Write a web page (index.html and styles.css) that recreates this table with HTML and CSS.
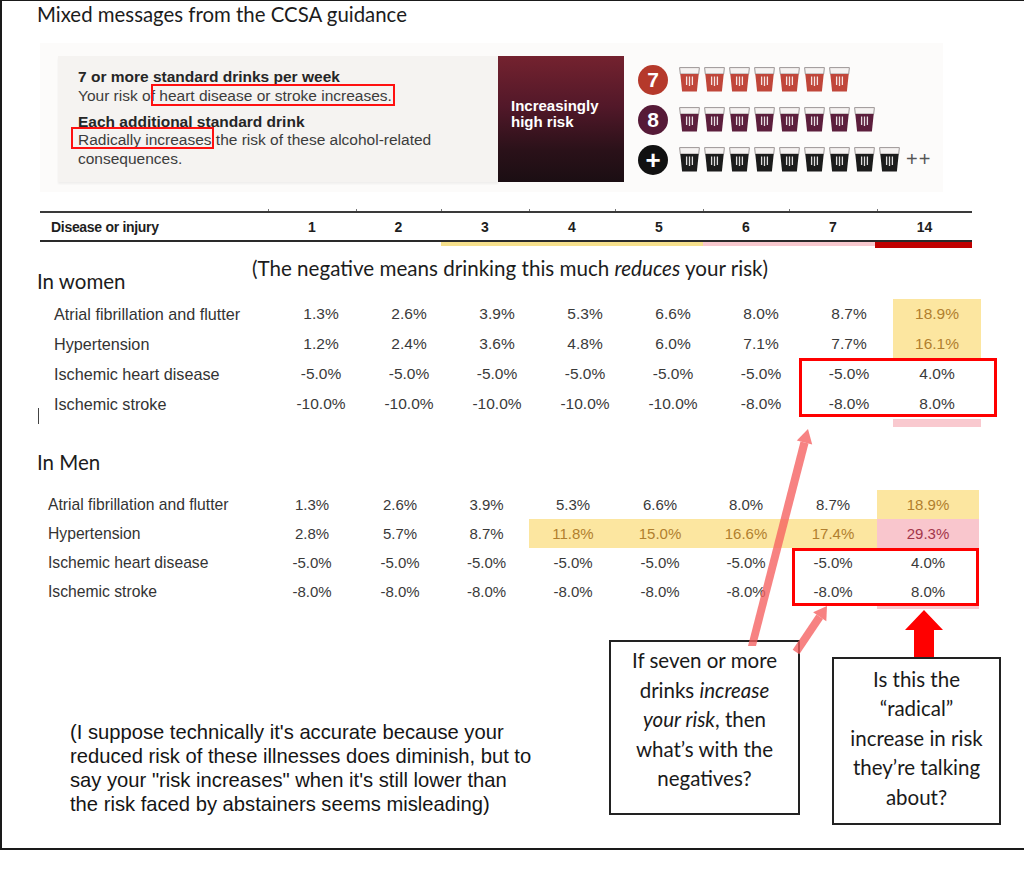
FILE: index.html
```html
<!DOCTYPE html>
<html>
<head>
<meta charset="utf-8">
<title>Mixed messages from the CCSA guidance</title>
<link rel="stylesheet" href="styles.css">
</head>
<body>
<svg class="sprite" aria-hidden="true">
  <defs>
    <symbol id="glass" viewBox="0 0 21 25">
      <path d="M0.6 0.6 H20.4 L19.7 7 H1.3 Z" fill="#f5f2f1" stroke="#9c9696" stroke-width="1"/>
      <path d="M1.3 7 H19.7 L17.9 24.6 H3.1 Z" fill="currentColor"/>
      <path d="M7.6 9.5 V18 M10.5 9.5 V19 M13.4 9.5 V18" stroke="#fff" stroke-width="1.3" opacity="0.85"/>
    </symbol>
  </defs>
</svg>

<div class="frame">
  <h1 class="title">Mixed messages from the CCSA guidance</h1>

  <div class="banner">
    <div class="panel">
      <p class="p-head">7 or more standard drinks per week</p>
      <p class="p-body">Your risk of <span class="mark m1">heart disease or stroke increases.</span></p>
      <p class="p-head second">Each additional standard drink</p>
      <p class="p-body"><span class="mark m2">Radically increases</span> the risk of these alcohol-related consequences.</p>
    </div>
    <div class="riskbox">Increasingly<br>high risk</div>
    <div class="glasses">
      <div class="grow r7">
        <span class="num">7</span>
        <svg class="gl"><use href="#glass"/></svg><svg class="gl"><use href="#glass"/></svg><svg class="gl"><use href="#glass"/></svg><svg class="gl"><use href="#glass"/></svg><svg class="gl"><use href="#glass"/></svg><svg class="gl"><use href="#glass"/></svg><svg class="gl"><use href="#glass"/></svg>
      </div>
      <div class="grow r8">
        <span class="num">8</span>
        <svg class="gl"><use href="#glass"/></svg><svg class="gl"><use href="#glass"/></svg><svg class="gl"><use href="#glass"/></svg><svg class="gl"><use href="#glass"/></svg><svg class="gl"><use href="#glass"/></svg><svg class="gl"><use href="#glass"/></svg><svg class="gl"><use href="#glass"/></svg><svg class="gl"><use href="#glass"/></svg>
      </div>
      <div class="grow rp">
        <span class="num plus">+</span>
        <svg class="gl"><use href="#glass"/></svg><svg class="gl"><use href="#glass"/></svg><svg class="gl"><use href="#glass"/></svg><svg class="gl"><use href="#glass"/></svg><svg class="gl"><use href="#glass"/></svg><svg class="gl"><use href="#glass"/></svg><svg class="gl"><use href="#glass"/></svg><svg class="gl"><use href="#glass"/></svg><svg class="gl"><use href="#glass"/></svg>
        <span class="more">++</span>
      </div>
    </div>
  </div>

  <div class="thead">
    <div class="th label">Disease or injury</div>
    <div class="th">1</div><div class="th">2</div><div class="th">3</div><div class="th">4</div>
    <div class="th">5</div><div class="th">6</div><div class="th">7</div><div class="th">14</div>
  </div>
  <div class="band">
    <span class="b-space"></span><span class="b-yellow"></span><span class="b-pink"></span><span class="b-red"></span>
  </div>

  <div class="note-row">
    <span class="section women">In women</span>
    <span class="note">(The negative means drinking this much <em>reduces</em> your risk)</span>
  </div>

  <div class="tbl women-tbl">
    <div class="c lab">Atrial fibrillation and flutter</div>
    <div class="c">1.3%</div><div class="c">2.6%</div><div class="c">3.9%</div><div class="c">5.3%</div><div class="c">6.6%</div><div class="c">8.0%</div><div class="c">8.7%</div><div class="c y">18.9%</div>
    <div class="c lab">Hypertension</div>
    <div class="c">1.2%</div><div class="c">2.4%</div><div class="c">3.6%</div><div class="c">4.8%</div><div class="c">6.0%</div><div class="c">7.1%</div><div class="c">7.7%</div><div class="c y">16.1%</div>
    <div class="c lab">Ischemic heart disease</div>
    <div class="c">-5.0%</div><div class="c">-5.0%</div><div class="c">-5.0%</div><div class="c">-5.0%</div><div class="c">-5.0%</div><div class="c">-5.0%</div><div class="c">-5.0%</div><div class="c">4.0%</div>
    <div class="c lab">Ischemic stroke</div>
    <div class="c">-10.0%</div><div class="c">-10.0%</div><div class="c">-10.0%</div><div class="c">-10.0%</div><div class="c">-10.0%</div><div class="c">-8.0%</div><div class="c">-8.0%</div><div class="c">8.0%</div>
    <div class="strip w-strip"></div>
  </div>

  <div class="section men">In Men</div>

  <div class="tbl men-tbl">
    <div class="c lab">Atrial fibrillation and flutter</div>
    <div class="c">1.3%</div><div class="c">2.6%</div><div class="c">3.9%</div><div class="c">5.3%</div><div class="c">6.6%</div><div class="c">8.0%</div><div class="c">8.7%</div><div class="c y">18.9%</div>
    <div class="c lab">Hypertension</div>
    <div class="c">2.8%</div><div class="c">5.7%</div><div class="c">8.7%</div><div class="c y">11.8%</div><div class="c y">15.0%</div><div class="c y">16.6%</div><div class="c y">17.4%</div><div class="c p">29.3%</div>
    <div class="c lab">Ischemic heart disease</div>
    <div class="c">-5.0%</div><div class="c">-5.0%</div><div class="c">-5.0%</div><div class="c">-5.0%</div><div class="c">-5.0%</div><div class="c">-5.0%</div><div class="c">-5.0%</div><div class="c">4.0%</div>
    <div class="c lab">Ischemic stroke</div>
    <div class="c">-8.0%</div><div class="c">-8.0%</div><div class="c">-8.0%</div><div class="c">-8.0%</div><div class="c">-8.0%</div><div class="c">-8.0%</div><div class="c">-8.0%</div><div class="c">8.0%</div>
    <div class="strip m-strip"></div>
  </div>

  <div class="bottom">
    <p class="remark">(I suppose technically it's accurate because your<br>reduced risk of these illnesses does diminish, but to<br>say your "risk increases" when it's still lower than<br>the risk faced by abstainers seems misleading)</p>
    <div class="callout c1">If seven or more<br>drinks <em>increase</em><br><em>your risk</em>, then<br>what’s with the<br>negatives?</div>
    <div class="callout c2">Is this the<br>“radical”<br>increase in risk<br>they’re talking<br>about?</div>
  </div>
</div>

<svg class="annot" viewBox="0 0 1024 890" aria-hidden="true">
  <g stroke="#777" stroke-width="1">
    <line x1="268.5" y1="209" x2="268.5" y2="211"/>
    <line x1="356.5" y1="209" x2="356.5" y2="211"/>
    <line x1="441.5" y1="209" x2="441.5" y2="211"/>
    <line x1="529.5" y1="209" x2="529.5" y2="211"/>
    <line x1="615.5" y1="209" x2="615.5" y2="211"/>
    <line x1="703.5" y1="209" x2="703.5" y2="211"/>
    <line x1="789.5" y1="209" x2="789.5" y2="211"/>
    <line x1="877.5" y1="209" x2="877.5" y2="211"/>
  </g>
  <line x1="38.5" y1="408" x2="38.5" y2="424" stroke="#444" stroke-width="1"/>
  <rect x="800.5" y="359.5" width="195" height="56" fill="none" stroke="#ff0000" stroke-width="3"/>
  <rect x="793.5" y="549.5" width="184" height="55" fill="none" stroke="#ff0000" stroke-width="3"/>
  <g fill="rgb(245,95,95)" stroke="none" opacity="0.78">
    <path d="M748 646 L756 646 L808.5 443.5 L800.5 441.5 Z"/>
    <path d="M808 429 L812.2 444.5 L796.8 440.5 Z"/>
  </g>
  <g opacity="0.78">
    <line x1="796" y1="652" x2="819.7" y2="616.8" stroke="rgb(245,95,95)" stroke-width="8"/>
    <path d="M827 606 L826.3 621.3 L813.1 612.3 Z" fill="rgb(245,95,95)"/>
  </g>
  <path d="M924 610 L943 630 L934 630 L934 657 L914 657 L914 630 L905 630 Z" fill="#ff0000"/>
</svg>
</body>
</html>
```

FILE: styles.css
```css
* { box-sizing: border-box; }

html, body {
  margin: 0;
  padding: 0;
  background: #ffffff;
}

body {
  position: relative;
  width: 1024px;
  height: 890px;
  overflow: hidden;
  font-family: "Liberation Sans", Arial, sans-serif;
  color: #222;
}

.sprite {
  position: absolute;
  width: 0;
  height: 0;
  overflow: hidden;
}

.frame {
  height: 850px;
  border-top: 1px solid #1a1a1a;
  border-left: 2px solid #1a1a1a;
  border-bottom: 2px solid #1a1a1a;
}

.title {
  margin: 0 0 0 35px;
  padding-top: 1px;
  font-family: Lato, "Open Sans", sans-serif;
  font-weight: 400;
  font-size: 20.4px;
  line-height: 24px;
  color: #1c1c1c;
}

/* ---------- banner ---------- */
.banner {
  display: flex;
  width: 903px;
  margin: 17px 0 0 38px;
  padding: 13px 0 10px 18px;
  background: #fcfbfa;
}

.panel {
  width: 440px;
  height: 126px;
  padding: 12px 0 0 20px;
  background: #f5f3f1;
  box-shadow: 0 2px 2px rgba(0, 0, 0, 0.05);
}

.panel p {
  margin: 0;
  width: 390px;
  font-size: 15.5px;
  line-height: 18.5px;
}

.p-head {
  font-weight: 700;
  color: #262626;
}

.p-head.second {
  margin-top: 7.5px !important;
}

.p-body {
  color: #3c3c3c;
}

.mark {
  position: relative;
}

.mark::after {
  content: "";
  position: absolute;
  border: 2px solid #ff1010;
}

.m1::after {
  left: -8px;
  right: -3px;
  top: -3px;
  bottom: -2px;
}

.m2::after {
  left: -7px;
  right: -2px;
  top: -4px;
  bottom: -1px;
}

.riskbox {
  width: 126px;
  height: 126px;
  padding: 42px 0 0 13px;
  background: linear-gradient(180deg, #74222f 0%, #521829 40%, #2a1119 75%, #1b0e13 100%);
  color: #ffffff;
  font-weight: 700;
  font-size: 15px;
  line-height: 16px;
}

.glasses {
  display: flex;
  flex-direction: column;
  gap: 10px;
  padding: 8.5px 0 0 14px;
}

.grow {
  display: flex;
  align-items: center;
  height: 30px;
}

.num {
  display: flex;
  align-items: center;
  justify-content: center;
  width: 30px;
  height: 30px;
  margin-right: 11px;
  border-radius: 50%;
  color: #fff;
  font-weight: 700;
  font-size: 21px;
  line-height: 1;
}

.r7 { color: #c0463a; }
.r7 .num { background: #b5392b; }
.r8 { color: #5c1e3c; }
.r8 .num { background: #561a37; }
.rp { color: #1b1b1b; }
.rp .num { background: #111; font-size: 26px; }

.gl {
  width: 21px;
  height: 25px;
  margin-right: 4px;
  flex: none;
}

.more {
  margin-left: 2px;
  font-size: 20px;
  color: #555;
  letter-spacing: 1px;
}

/* ---------- table header ---------- */
.thead {
  display: grid;
  grid-template-columns: 228px 88px 85px 88px 86px 88px 86px 88px 95px;
  align-items: center;
  width: 932px;
  height: 31px;
  margin: 19px 0 0 38px;
  border-top: 2px solid #3a3a3a;
  border-bottom: 2px solid #2a2a2a;
}

.th {
  text-align: center;
  font-weight: 700;
  font-size: 14px;
  color: #1e1e1e;
}

.th.label {
  text-align: left;
  padding-left: 11px;
  letter-spacing: -0.3px;
}

.band {
  display: flex;
  align-items: flex-start;
  height: 6px;
  margin-left: 38px;
}

.b-space { width: 401px; }
.b-yellow { width: 262px; height: 4px; background: #f6e08c; }
.b-pink { width: 172px; height: 4px; background: #f8c8ce; }
.b-red { width: 97px; height: 6px; background: #c00000; }

/* ---------- sections ---------- */
.note-row {
  display: flex;
  align-items: flex-start;
  margin-left: 35px;
  padding-top: 9px;
}

.section {
  font-family: Lato, "Open Sans", sans-serif;
  font-size: 20.5px;
  line-height: 22px;
  color: #1c1c1c;
}

.section.women {
  width: 215px;
  margin-top: 13px;
}

.section.men {
  margin: 24px 0 0 35px;
}

.note {
  font-family: Lato, "Open Sans", sans-serif;
  font-size: 20.6px;
  line-height: 22px;
  color: #1c1c1c;
}

/* ---------- data tables ---------- */
.tbl {
  display: grid;
  align-items: stretch;
}

.women-tbl {
  grid-template-columns: 223px repeat(8, 88px);
  margin: 7px 0 0 52px;
}

.men-tbl {
  grid-template-columns: 220px 88px 88px 85px 88px 86px 86px 88px 102px;
  margin: 17px 0 0 46px;
}

.c {
  display: flex;
  align-items: center;
  justify-content: center;
  color: #3a3a3a;
}

.women-tbl .c {
  height: 30px;
  font-size: 15.5px;
}

.men-tbl .c {
  height: 29px;
  font-size: 15px;
}

.women-tbl .c.lab {
  font-size: 16.2px;
}

.men-tbl .c.lab {
  font-size: 15.7px;
}

.c.lab {
  justify-content: flex-start;
  color: #333;
}

.c.y {
  background: #fce6a0;
  color: #b17f2e;
}

.c.p {
  background: #f9c6cd;
  color: #a3364a;
}

.strip {
  grid-column: 9;
  background: #f9c9cf;
}

.w-strip { height: 8px; }
.m-strip { height: 3px; }

/* ---------- bottom ---------- */
.bottom {
  display: flex;
  align-items: flex-start;
}

.remark {
  width: 539px;
  margin: 111px 0 0 68px;
  font-size: 20.2px;
  line-height: 24px;
  white-space: nowrap;
  color: #151515;
}

.callout {
  border: 2px solid #222;
  text-align: center;
  font-family: Lato, "Open Sans", sans-serif;
  font-size: 20.5px;
  line-height: 29.5px;
  color: #1a1a1a;
}

.c1 {
  width: 191px;
  height: 175px;
  margin-top: 31px;
  padding-top: 4px;
}

.c2 {
  width: 169px;
  height: 168px;
  margin: 48px 0 0 32px;
  padding-top: 5.5px;
}

/* ---------- annotation layer ---------- */
.annot {
  position: absolute;
  top: 0;
  left: 0;
  width: 1024px;
  height: 890px;
  pointer-events: none;
}
```
